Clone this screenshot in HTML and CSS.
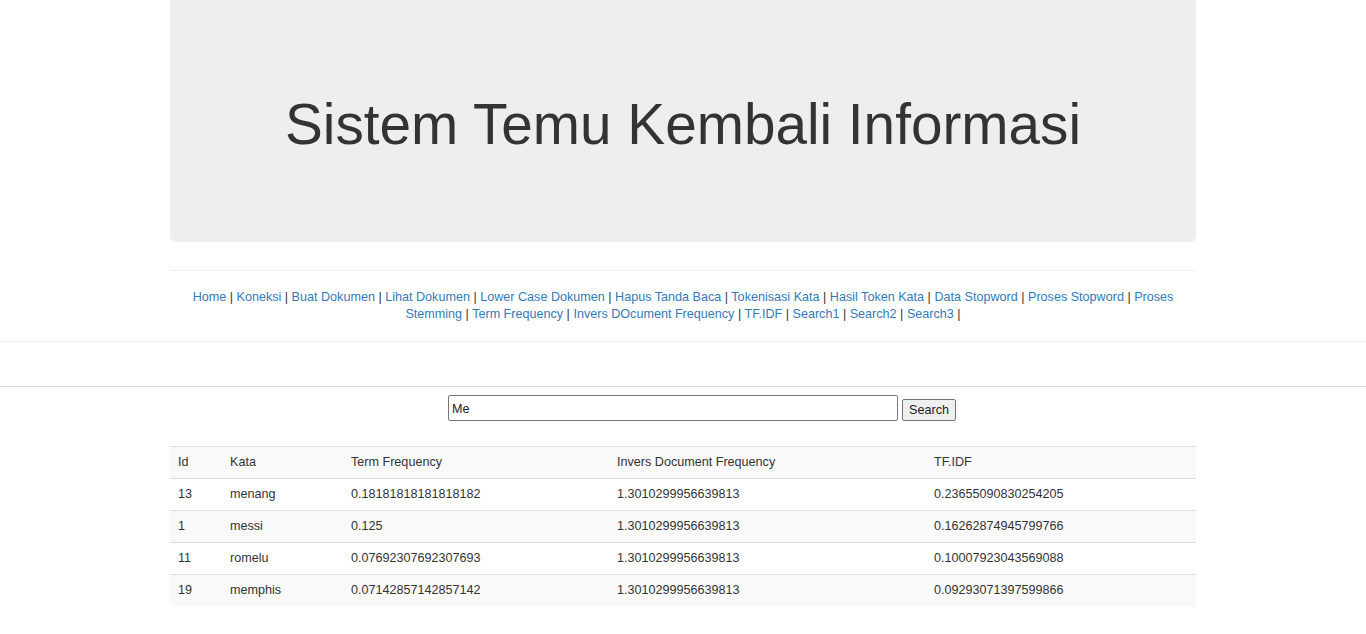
FILE: index.html
```html
<!DOCTYPE html>
<html>
<head>
<meta charset="utf-8">
<title>Sistem Temu Kembali Informasi</title>
<link rel="stylesheet" href="styles.css">
</head>
<body>
<div class="container">
  <div class="jumbotron">
    <h1 class="title">Sistem Temu Kembali Informasi</h1>
  </div>
  <hr class="rule-inner">
  <p class="nav">
    <a href="#">Home</a> | <a href="#">Koneksi</a> | <a href="#">Buat Dokumen</a> | <a href="#">Lihat Dokumen</a> | <a href="#">Lower Case Dokumen</a> | <a href="#">Hapus Tanda Baca</a> | <a href="#">Tokenisasi Kata</a> | <a href="#">Hasil Token Kata</a> | <a href="#">Data Stopword</a> | <a href="#">Proses Stopword</a> | <a href="#">Proses Stemming</a> | <a href="#">Term Frequency</a> | <a href="#">Invers DOcument Frequency</a> | <a href="#">TF.IDF</a> | <a href="#">Search1</a> | <a href="#">Search2</a> | <a href="#">Search3</a> |
  </p>
</div>
<hr class="rule-full rule-a">
<hr class="rule-full rule-b">
<form class="search">
  <input class="search-input" type="text" value="Me">
  <button class="search-btn" type="button">Search</button>
</form>
<div class="container">
  <table class="data">
    <colgroup>
      <col class="c1"><col class="c2"><col class="c3"><col class="c4"><col class="c5">
    </colgroup>
    <tbody>
      <tr><td>Id</td><td>Kata</td><td>Term Frequency</td><td>Invers Document Frequency</td><td>TF.IDF</td></tr>
      <tr><td>13</td><td>menang</td><td>0.18181818181818182</td><td>1.3010299956639813</td><td>0.23655090830254205</td></tr>
      <tr><td>1</td><td>messi</td><td>0.125</td><td>1.3010299956639813</td><td>0.16262874945799766</td></tr>
      <tr><td>11</td><td>romelu</td><td>0.07692307692307693</td><td>1.3010299956639813</td><td>0.10007923043569088</td></tr>
      <tr><td>19</td><td>memphis</td><td>0.07142857142857142</td><td>1.3010299956639813</td><td>0.09293071397599866</td></tr>
    </tbody>
  </table>
</div>
</body>
</html>
```
FILE: styles.css
```css
* { box-sizing: border-box; }
body {
  margin: 0;
  font-family: "Liberation Sans", Arial, sans-serif;
  font-size: 12.6px;
  color: #333;
  background: #fff;
}
.container {
  width: 1026px;
  margin: 0 auto;
}
.jumbotron {
  height: 242px;
  padding-top: 8px;
  background: #eee;
  border-radius: 0 0 6px 6px;
  display: flex;
  align-items: center;
  justify-content: center;
}
.title {
  margin: 0;
  font-size: 56.7px;
  font-weight: 400;
  color: #333;
  line-height: 1;
}
.rule-inner {
  margin: 28px 0 0;
  border: 0;
  border-top: 1px solid #eee;
  height: 0;
}
.nav {
  margin: 18px 0 0;
  padding: 0 18px;
  text-align: center;
  line-height: 17px;
}
.nav a {
  color: #337ab7;
  text-decoration: none;
}
.rule-full {
  margin: 0;
  border: 0;
  height: 0;
}
.rule-a {
  margin-top: 18px;
  border-top: 1px solid #eee;
}
.rule-b {
  margin-top: 44px;
  border-top: 1px solid #ddd;
}
.search {
  display: flex;
  justify-content: center;
  align-items: center;
  gap: 4px;
  margin: 8px 0 0;
  padding-left: 38px;
}
.search-input {
  width: 450px;
  height: 26px;
  border: 1px solid #767676;
  border-radius: 2px;
  padding: 2px 3px 1px;
  font-family: "Liberation Sans", Arial, sans-serif;
  font-size: 12.6px;
  color: #222;
}
.search-btn {
  width: 54px;
  height: 22px;
  margin-top: 3px;
  border: 1px solid #767676;
  border-radius: 2px;
  background: #efefef;
  font-family: "Liberation Sans", Arial, sans-serif;
  font-size: 12.6px;
  color: #222;
  padding: 0;
}
.data {
  width: 100%;
  margin-top: 25px;
  border-collapse: collapse;
  table-layout: fixed;
}
.c1 { width: 52px; }
.c2 { width: 121px; }
.c3 { width: 266px; }
.c4 { width: 317px; }
.c5 { width: 270px; }
.data td {
  padding: 7px 8px;
  line-height: 17px;
  height: 32px;
  border-top: 1px solid #ddd;
  vertical-align: top;
}
.data tr:nth-child(odd) td {
  background: #f9f9f9;
}
```
